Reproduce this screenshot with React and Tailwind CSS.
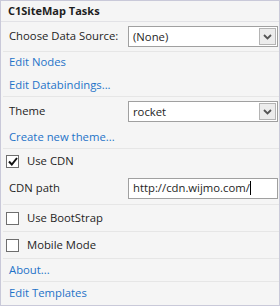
import React from 'react';

const font = { fontFamily: '"Open Sans", "Noto Sans", sans-serif' };

const Combo = ({ value }) => (
    <div className="ml-auto w-[150px] h-[21px] border border-[#a0a0a0] bg-white flex items-center pl-[4px] pr-[1px]">
        <span className="text-[#1e1e1e] leading-none whitespace-nowrap">{value}</span>
        <div className="ml-auto w-[17px] h-[17px] border border-[#b4b4b4] bg-[#ececec] flex items-center justify-center">
            <svg width="9" height="6" viewBox="0 0 9 6">
                <path d="M1 1 L4.5 4.5 L8 1" fill="none" stroke="#555" strokeWidth="1.8" />
            </svg>
        </div>
    </div>
);

const Check = ({ checked, label }) => (
    <div className="flex items-center gap-[8px] pl-[3px]">
        <div className="w-[13px] h-[13px] border border-[#6e6e6e] bg-white flex items-center justify-center">
            {checked && (
                <svg width="10" height="9" viewBox="0 0 10 9">
                    <path d="M1 4.5 L3.8 7.5 L9 1" fill="none" stroke="#111" strokeWidth="2" />
                </svg>
            )}
        </div>
        <span className="text-[#1e1e1e] whitespace-nowrap">{label}</span>
    </div>
);

const Link = ({ children }) => (
    <span className="text-[#1e73c8] pl-[6px] whitespace-nowrap">{children}</span>
);

export default function App() {
    return (
        <div style={font} className="w-[280px] h-[306px] border border-[#c9c9d9] bg-[#f5f5f5] flex flex-col text-[11.3px] leading-normal">
            {/* header */}
            <div className="h-[21px] border-b border-[#e2e2e6] flex items-center pl-[7px]">
                <span className="text-[11px] font-bold text-[#1e1e1e] whitespace-nowrap">C1SiteMap Tasks</span>
            </div>

            <div className="flex flex-col pl-[2px]">
                <div className="h-[30px] border-b border-[#e6e6e6] flex items-start pt-[4px] pr-[1px]">
                    <span className="text-[#1e1e1e] pl-[6px] pt-[2px] whitespace-nowrap">Choose Data Source:</span>
                    <Combo value="(None)" />
                </div>

                <div className="h-[45px] border-b border-[#e6e6e6] flex flex-col justify-center gap-[6px]">
                    <Link>Edit Nodes</Link>
                    <Link>Edit Databindings...</Link>
                </div>

                <div className="h-[52px] border-b border-[#e6e6e6] flex flex-col pt-[4px] pr-[1px]">
                    <div className="flex items-center">
                        <span className="text-[#1e1e1e] pl-[6px]">Theme</span>
                        <Combo value="rocket" />
                    </div>
                    <div className="mt-[7px] flex">
                        <Link>Create new theme...</Link>
                    </div>
                </div>

                <div className="h-[56px] border-b border-[#e6e6e6] flex flex-col pt-[4px] pr-[1px]">
                    <Check checked label="Use CDN" />
                    <div className="flex items-center mt-[8px]">
                        <span className="text-[#1e1e1e] pl-[6px]">CDN path</span>
                        <div className="ml-auto w-[150px] h-[21px] border border-[#a0a0a0] bg-white flex items-center pl-[4px]">
                            <span className="text-[#1e1e1e] whitespace-nowrap">http://cdn.wijmo.com/</span>
                            <span className="w-px h-[14px] bg-black"></span>
                        </div>
                    </div>
                </div>

                <div className="h-[27px] border-b border-[#e6e6e6] flex items-center">
                    <Check label="Use BootStrap" />
                </div>

                <div className="h-[27px] border-b border-[#e6e6e6] flex items-center">
                    <Check label="Mobile Mode" />
                </div>

                <div className="h-[23px] border-b border-[#e6e6e6] flex items-center">
                    <Link>About...</Link>
                </div>

                <div className="h-[23px] flex items-center">
                    <Link>Edit Templates</Link>
                </div>
            </div>
        </div>
    );
}
